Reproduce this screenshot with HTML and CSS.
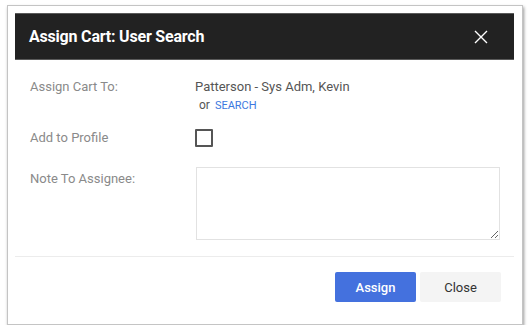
FILE: index.html
```html
<!DOCTYPE html>
<html lang="en">
<head>
  <meta charset="UTF-8" />
  <title>Assign Cart: User Search</title>
  <link rel="stylesheet" href="styles.css">
</head>
<body>
  <div class="dialog">
    <div class="dialog-header">
      <h2>Assign Cart: User Search</h2>
      <button class="close-x" aria-label="Close">
        <svg width="14" height="14" viewBox="0 0 14 14">
          <path d="M1 1 L13 13 M13 1 L1 13" stroke="#fff" stroke-width="1.4" fill="none" />
        </svg>
      </button>
    </div>

    <div class="dialog-body">
      <div class="row">
        <label>Assign Cart To:</label>
        <div class="value">
          <div class="user">Patterson - Sys Adm, Kevin</div>
          <div class="or">&nbsp;or <a href="#">SEARCH</a></div>
        </div>
      </div>
      <div class="row row-check">
        <label>Add to Profile</label>
        <span class="checkbox"></span>
      </div>
      <div class="row row-note">
        <label>Note To Assignee:</label>
        <textarea class="note"></textarea>
      </div>
    </div>

    <div class="dialog-footer">
      <button class="btn btn-primary">Assign</button>
      <button class="btn">Close</button>
    </div>
  </div>
</body>
</html>
```

FILE: styles.css
```css
* {
  box-sizing: border-box;
}

body {
  margin: 0;
  background: #fff;
  font-family: Roboto, "Liberation Sans", sans-serif;
}

.dialog {
  width: 516px;
  height: 320px;
  margin: 5px 0 0 7px;
  padding: 7px 8px 0 7px;
  background: #fff;
  border: 1px solid #c4c4c4;
  box-shadow: 1px 2px 3px rgba(0, 0, 0, 0.4);
}

.dialog-header {
  height: 47px;
  background: #222;
  border-top: 1px solid #5a5a5a;
  border-bottom: 1px solid #5a5a5a;
  display: flex;
  align-items: center;
  justify-content: space-between;
  padding: 0 26px 0 14px;
}

.dialog-header h2 {
  margin: 0;
  color: #fff;
  font-size: 16px;
  font-weight: 700;
  letter-spacing: -0.2px;
}

.close-x {
  background: none;
  border: none;
  padding: 0;
  display: flex;
  cursor: pointer;
}

.dialog-body {
  padding: 18px 0 16px 15px;
  border-bottom: 1px solid #ececec;
}

.row {
  display: flex;
  font-size: 13px;
  line-height: 18px;
}

.row label {
  width: 165px;
  flex-shrink: 0;
  color: #8a8a8a;
}

.user {
  color: #555;
}

.or {
  color: #555;
  font-size: 12px;
  padding-left: 1px;
}

.or a {
  margin-left: 2px;
  color: #3c78e0;
  font-size: 11px;
  text-decoration: none;
}

.row-check {
  margin-top: 14px;
  align-items: center;
}

.checkbox {
  width: 18px;
  height: 18px;
  border: 2px solid #555;
  border-radius: 1px;
}

.row-note {
  margin-top: 20px;
}

.row-note label {
  padding-top: 3px;
}

.note {
  width: 304px;
  height: 73px;
  margin-left: 1px;
  border: 1px solid #e2e2e2;
  border-radius: 0;
  font-family: inherit;
  font-size: 13px;
}

.dialog-footer {
  display: flex;
  justify-content: flex-end;
  gap: 4px;
  padding: 15px 13px 0 0;
}

.btn {
  width: 81px;
  height: 30px;
  border: none;
  border-radius: 2px;
  background: #f4f4f4;
  color: #333;
  font-family: inherit;
  font-size: 13px;
  cursor: pointer;
}

.btn-primary {
  background: #4471de;
  color: #fff;
  font-weight: 500;
}
```
